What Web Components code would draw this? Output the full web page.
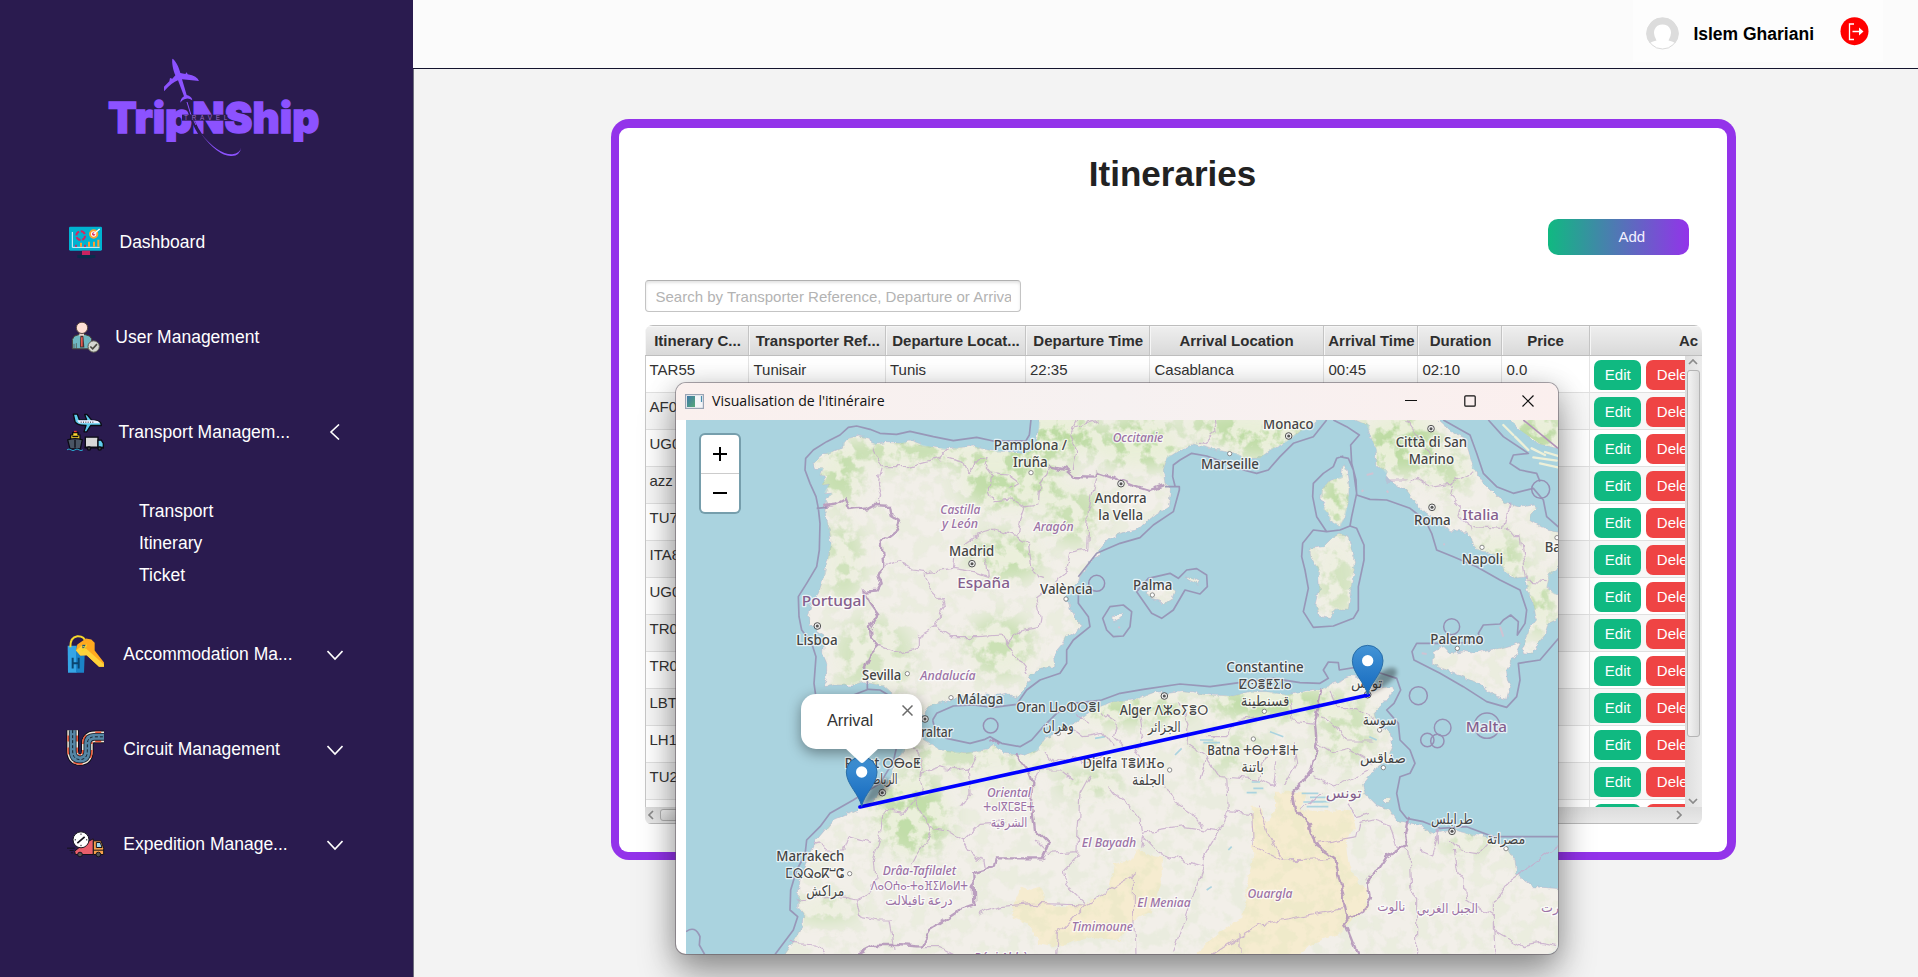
<!DOCTYPE html>
<html lang="en">
<head>
<meta charset="utf-8">
<title>TripNShip - Itineraries</title>
<style>
html,body{margin:0;height:100%;overflow:hidden}
body{font-family:"Liberation Sans",Arial,sans-serif;background:#f3f3f3}
</style>
</head>
<body>
<trip-app></trip-app>
<script>
function define(name, html, setup) {
  const t = document.createElement('template');
  t.innerHTML = html;
  customElements.define(name, class extends HTMLElement {
    connectedCallback() {
      if (this.shadowRoot) return;
      const root = this.attachShadow({mode: 'open'});
      root.appendChild(t.content.cloneNode(true));
      if (setup) setup.call(this, root);
    }
  });
}

/* ---------- brand logo ---------- */
define('brand-logo', `
<style>:host{display:block;height:194.5px;padding:40px 0 0 90px;box-sizing:border-box}svg{display:block;overflow:visible}</style>
<svg width="250" height="130" viewBox="0 0 750 390">
  <text x="54" y="280" textLength="634" lengthAdjust="spacingAndGlyphs" font-family="Inter,sans-serif" font-weight="900" font-size="126" fill="#8c52ff" stroke="#8c52ff" stroke-width="4">TripNShip</text>
  <path d="M290 186Q302 240 335 290" fill="none" stroke="#2a1b4f" stroke-width="10"/>
  <path d="M291 186Q300 225 318 255" fill="none" stroke="#8c52ff" stroke-width="3"/>
  <rect x="276" y="224" width="136" height="18" fill="#2a1b4f"/>
  <text x="282" y="240" font-size="19" textLength="130" font-family="Liberation Sans,sans-serif" fill="#9c6bc0">TRAVEL</text>
  <path d="M332 280Q385 345 427 343Q450 340 454 322Q449 350 422 348Q382 347 332 280Z" fill="#8c52ff"/>
  <path d="M247 56C255 59 266 78 271 99L286 102L290 97L293 103Q322 108 327 123L276 118L290 165C300 168 306 172 307 181Q297 174 289 176Q277 177 271 188Q271 176 282 169L264 121Q246 127 222 154V140L238 124L240 114L247 116L256 106C249 89 245 68 247 56Z" fill="#8c52ff"/>
</svg>`);

/* ---------- navigation ---------- */
const ICONS = {
  dashboard: ['51 40 111 111', `
   <rect x="57" y="48" width="99" height="72" rx="4" fill="#00b3d1"/><path d="M96 120h24v14H96z" fill="#c92360"/><path d="M82 133h54v8q-27 3-54 0z" fill="#0a2b4a"/>
   <path d="M67 64v46h82" stroke="#e8f4f8" stroke-width="3" fill="none"/>
   <circle cx="92" cy="75" r="13" fill="none" stroke="#d6275f" stroke-width="6" stroke-dasharray="15 5"/>
   <circle cx="131" cy="70" r="11" fill="#fff" stroke="#ff9f30" stroke-width="6"/><circle cx="131" cy="70" r="5" fill="#d6275f"/><path d="M131 70l18-15" stroke="#fff" stroke-width="4"/>
   <path d="M93 96v12M117 93v15M132 93v15M145 87v21" stroke="#ff9f30" stroke-width="6"/><path d="M78 102v7M105 102v7" stroke="#d6275f" stroke-width="5"/>`],
  user: ['51 325.5 111 111', `
   <path d="M67 415V387l6-10 14-5h18l14 5 6 8v30z" fill="#6fb9c3" stroke="#4b4238" stroke-width="3"/>
   <path d="M88 368h14v8l-6 8-8-8z" fill="#e5d6cf"/><path d="M91 376h9l3 35h-13z" fill="#4a3030"/><path d="M93 380h5v28h-5z" fill="#e4574d"/>
   <circle cx="96" cy="352" r="17" fill="#ffe0d6" stroke="#5a4740" stroke-width="3"/><path d="M79 398v16M72 400v14" stroke="#4b4238" stroke-width="2"/>
   <circle cx="131" cy="408" r="17" fill="#d5d8d0" stroke="#5a5a50" stroke-width="3"/><path d="M121 408l7 7 13-14" fill="none" stroke="#4a4a40" stroke-width="5"/>`],
  transport: ['51 610.5 111 111', `
   <g stroke="#0b0b14" stroke-width="4" stroke-linejoin="round"><path d="M70 611h12l6 17h22l-6-16h7l14 17q30 0 29 16H122l-12 19h-8l6-19Q80 645 75 633z" fill="#5fcdee"/><path d="M82 629h50q15 2 18 9H90q-6-2-8-9z" fill="#eef" stroke="none"/><path d="M92 635h42" stroke="#222" stroke-width="3" stroke-dasharray="3 4"/>
   <path d="M62 690v-17h6v-7h16v7h6v17z" fill="#ffd92e"/><path d="M53 688q23-7 44 0l-6 27H60z" fill="#4a5564"/><path d="M75 688v24M67 678h18" /><path d="M72 663h8" stroke="#e33"/></g>
   <path d="M51 718q6-5 12 0t12 0 12 0 12 0" fill="none" stroke="#2ba6cd" stroke-width="3"/>
   <g stroke="#0b0b14" stroke-width="4"><path d="M106 680h38v31h-38z" fill="#d8d8d8"/><path d="M144 689h10l6 10v13h-16z" fill="#5fcdee"/><path d="M104 711h58" stroke-width="5"/><circle cx="117" cy="714" r="5" fill="#444"/><circle cx="149" cy="714" r="5" fill="#444"/></g>`],
  key: ['51 46.5 111 111', `
   <path d="M53 76h27v81H54z" fill="#35a5e5"/><path d="M78 76h27l-3 81H78z" fill="#1b83c8"/>
   <path d="M61 80Q60 50 82 47Q104 46 107 66" fill="none" stroke="#f6d72c" stroke-width="6"/>
   <path d="M68 112v32M86 112v32M68 128h18" stroke="#0a4570" stroke-width="6"/>
   <path d="M78 90L82 72 108 54 124 57 134 67V90L162 126V139H147L110 104 91 105z" fill="#ffa91f"/><path d="M78 90L97 74l65 58v7H147L110 104 91 105z" fill="#ffd23a"/><rect x="97" y="73" width="11" height="10" fill="#14537e"/><path d="M98 77h6v3h-6z" fill="#ffd23a"/><path d="M95 92q10-5 14-20" stroke="#f6d72c" stroke-width="4" fill="none"/>`],
  circuit: ['51 331.5 111 111', `
   <g fill="none"><path d="M68 329v62q0 26 22 26t22-26V371q0-22 22-22h28" stroke="#10101a" stroke-width="38"/><path d="M68 329v62q0 26 22 26t22-26V371q0-22 22-22h28" stroke="#f3eadc" stroke-width="32"/><path d="M68 329v62q0 26 22 26t22-26V371q0-22 22-22h28" stroke="#f15a3a" stroke-width="32" stroke-dasharray="18 18" stroke-dashoffset="20"/><path d="M68 329v62q0 26 22 26t22-26V371q0-22 22-22h28" stroke="#1b2430" stroke-width="23"/><path d="M68 329v62q0 26 22 26t22-26V371q0-22 22-22h28" stroke="#5687a6" stroke-width="18"/><path d="M68 329v62q0 26 22 26t22-26V371q0-22 22-22h28" stroke="#15202c" stroke-width="3" stroke-dasharray="9 6"/></g>`],
  truck: ['51 616.5 111 111', `
   <g stroke="#15131c" stroke-width="3" stroke-linejoin="round"><path d="M74 692q16-12 22-20l34-17v47H76z" fill="#e95e6b"/><path d="M130 661h23l8 22v19h-31z" fill="#f7a04b"/><path d="M139 666h12l5 15h-17z" fill="#9fd8ee"/><path d="M131 689h30" /><circle cx="90" cy="702" r="7" fill="#555"/><circle cx="145" cy="702" r="7" fill="#555"/><circle cx="93" cy="658" r="24" fill="#fff"/><path d="M82 668l22-19" stroke-width="5"/><path d="M93 639v4M93 673v4M74 658h4M108 658h4" stroke-width="3"/><path d="M51 683h23M59 690h12M63 697h6" /></g>`]
};
define('nav-item', `
<style>
:host{display:flex;align-items:center;height:95px;color:#fff;font-size:17.5px;box-sizing:border-box;padding-left:67px}
svg{display:block;flex:none}.i{width:37px;height:37px;overflow:visible}
.t{flex:none;white-space:nowrap;width:205px}
.c{width:16px;height:16px;fill:none;stroke:#fff;stroke-width:1.6}
</style><svg class="i"></svg><span class="t"><slot></slot></span>`, function (root) {
  const [vb, art] = ICONS[this.getAttribute('icon')];
  const s = root.querySelector('.i'); s.setAttribute('viewBox', vb); s.innerHTML = art;
  const t = root.querySelector('.t');
  t.style.marginLeft = this.getAttribute('gap') + 'px';
  t.style.width = (223.2 - this.getAttribute('gap')) + 'px';
  const c = this.getAttribute('chevron');
  if (c) t.insertAdjacentHTML('afterend', `<svg class="c" viewBox="0 0 16 16"><path d="${c === 'left' ? 'M12 .5L4 8l8 7.5' : 'M.5 4l7.5 8 7.5-8'}"/></svg>`);
});
define('nav-sub', `
<style>:host{display:block;height:32px;line-height:32px;padding-left:139px;color:#fff;font-size:17.5px}</style><slot></slot>`);
define('side-bar', `
<style>
:host{display:block;width:413px;height:977px;background:#2a1b4f;box-sizing:border-box;flex:none}
.sub{padding:15.5px 0 16px}
</style>
<brand-logo></brand-logo>
<nav-item icon="dashboard" gap="15.5">Dashboard</nav-item>
<nav-item icon="user" gap="11.3">User Management</nav-item>
<nav-item icon="transport" gap="14.5" chevron="left">Transport Managem...</nav-item>
<div class="sub"><nav-sub>Transport</nav-sub><nav-sub>Itinerary</nav-sub><nav-sub>Ticket</nav-sub></div>
<nav-item icon="key" gap="19.3" chevron="down">Accommodation Ma...</nav-item>
<nav-item icon="circuit" gap="19.3" chevron="down">Circuit Management</nav-item>
<nav-item icon="truck" gap="19.3" chevron="down">Expedition Manage...</nav-item>`);

/* ---------- top bar ---------- */
define('top-bar', `
<style>
:host{display:flex;justify-content:flex-end;height:69px;background:#fbfbfb;border-bottom:1px solid #14142e;box-sizing:border-box;padding-right:35px}
.box{display:flex;width:250px;height:62px;background:#fdfdfd;box-sizing:border-box;padding:17px 0 0 13px}
svg{flex:none}
.n{font-weight:bold;font-size:17.5px;line-height:20px;margin:6.5px 0 0 14.4px;width:121px;white-space:nowrap;color:#000}
.o{margin:0 0 0 25.600px}
</style>
<div class="box">
<svg width="33" height="33" viewBox="0 0 33 33"><circle cx="16.5" cy="16.5" r="15.5" fill="#fff" stroke="#dadada"/><path d="M16.5.5a16 16 0 0 1 13 25.500Q26 24 22.500 23.500 28 14 21.500 8.800 16.500 6 11.500 8.800 5 14 10.500 23.500 7 24 3.500 26A16 16 0 0 1 16.500.5Z" fill="#dcdcdc"/></svg>
<span class="n">Islem Ghariani</span>
<svg class="o" width="29" height="29" viewBox="0 0 29 29"><circle cx="14.500" cy="14.200" r="14" fill="#f00"/><path d="M14 7H9.500v15.500H14M12.500 14.500h9" fill="none" stroke="#fff" stroke-width="1.300"/><path d="M19 10.500l4.500 4-4.500 4z" fill="#fff"/></svg>
</div>`);

/* ---------- table ---------- */
define('row-button', `
<style>:host{display:block;box-sizing:border-box;height:30px;line-height:30px;border-radius:7px;color:#fff;font-size:15px;padding-left:10.500px;flex:none;white-space:nowrap}</style><slot></slot>`);
define('itinerary-table', `
<style>
:host{display:grid;grid-template:31px 451px 17px/1fr;width:1056.500px;border-radius:8px 8px 6px 6px;overflow:hidden;box-sizing:border-box;color:#333;font-size:15px}
.r,.h{display:grid;grid-template-columns:104px 136.500px 140px 124.500px 174px 94px 84px 88px 1fr}
.h{background:linear-gradient(#efefef,#d9d9d9);border-top:1px solid #bdbdbd;border-bottom:1px solid #bebebe;box-sizing:border-box;font-weight:bold;text-align:center;line-height:29px;color:#2e2e2e}
.h span{border-right:1px solid #c4c4c4;box-shadow:inset 1px 1px #f6f6f6;white-space:nowrap;overflow:hidden;padding-left:2px}
.h span:nth-child(5),.h span:nth-child(8){padding-left:0}
.h span:last-child{text-align:left;padding-left:89px;border-right:0}
.m{display:grid;grid-template-columns:1fr 16.500px;min-height:0}
.b{overflow:hidden;border-left:1px solid #c8c8c8;min-width:0}
.b .r{width:1055px;margin-left:-1px}
.r{height:37px;border-bottom:1px solid #e0e0e0;box-sizing:border-box;background:#fff}
.r:nth-child(even){background:#f7f7f7}
.r>*{border-right:1px solid #e4e4e4;padding:5px 0 0 4.500px;line-height:17px;min-width:0}
.r>div{display:flex;gap:5.500px;padding:4px 0 0 4.300px}
.e{background:#10b981;width:46.500px}.d{background:#ef4444;width:60px}
.v{background:linear-gradient(90deg,#dedede,#ececec)}
svg{display:block;flex:none;fill:none;stroke:#8a8a8a;stroke-width:1.700}
.v{display:flex;flex-direction:column;align-items:center;padding-top:3px;box-sizing:border-box}
.v i{flex:none;width:11px;height:365px;border:1px solid #b4b4b4;border-radius:3px;background:linear-gradient(90deg,#f3f3f3,#dcdcdc);margin:5px 0 61px}
.f{background:linear-gradient(#dcdcdc,#e9e9e9);display:flex;align-items:center;padding:0 18px 0 1px;border-bottom:1px solid #bbb;box-sizing:border-box}
.f i{flex:1;margin:0 14px 0 4px;height:10px;border:1px solid #b0b0b0;border-radius:3px;background:linear-gradient(#f3f3f3,#dedede);max-width:760px}
.f svg:last-child{margin-left:auto}
</style>
<div class="h"><span>Itinerary C...</span><span>Transporter Ref...</span><span>Departure Locat...</span><span>Departure Time</span><span>Arrival Location</span><span>Arrival Time</span><span>Duration</span><span>Price</span><span>Ac</span></div>
<div class="m"><div class="b"></div><div class="v"><svg width="10" height="6"><path d="M1 5l4-4 4 4"/></svg><i></i><svg width="10" height="6"><path d="M1 1l4 4 4-4"/></svg></div></div>
<div class="f"><svg width="10" height="10"><path d="M7 1L3 5l4 4"/></svg><i></i><svg width="10" height="10"><path d="M3 1l4 4-4 4"/></svg></div>`, function (root) {
  const rows = [['TAR55', 'Tunisair', 'Tunis', '22:35', 'Casablanca', '00:45', '02:10', '0.0'],
    ['AF0'], ['UG0'], ['azz'], ['TU7'], ['ITA8'], ['UG0'], ['TR0'], ['TR0'], ['LBT'], ['LH1'], ['TU2'], ['']];
  root.querySelector('.b').innerHTML = rows.map((r, n) => {
    let s = '';
    for (let i = 0; i < 8; i++) s += `<span>${r[i] || ''}</span>`;
    return `<div class="r">${s}<div><row-button class="e">${n < 12 ? 'Edit' : ''}</row-button><row-button class="d">${n < 12 ? 'Dele' : ''}</row-button></div></div>`;
  }).join('');
});

/* ---------- card ---------- */
define('itinerary-card', `
<style>
:host{display:block;box-sizing:border-box;width:1125px;height:741px;margin:50px 0 0 197.500px;padding:8.500px;background:#9333ea;border-radius:18px}
.in{background:#fff;border-radius:9px;height:724px;box-sizing:border-box;padding:23px 26px 0;display:flex;flex-direction:column;align-items:flex-start}
h1{margin:0;align-self:stretch;text-align:center;font-size:35px;line-height:46px;color:#222;padding-right:1px}
.add{align-self:flex-end;margin:22px 12.500px 0 0;width:140.500px;height:36.500px;line-height:36.500px;border-radius:10px;background:linear-gradient(90deg,#10b981,#9333ea);color:#f3f0ff;font-size:15px;text-align:center;box-sizing:border-box;padding-left:27px}
.s{margin:25px 0 13px;width:375.500px;height:32px;border:1px solid #bcbcbc;border-color:#b0b0b0 #c4c4c4 #c4c4c4;border-radius:4px;box-sizing:border-box;box-shadow:inset 0 2px 3px #e4e4e4;padding:0 8.500px 0 9.500px;font-size:15px;line-height:31px;color:#b3b3b3}
.s div{overflow:hidden;white-space:nowrap}
</style>
<div class="in"><h1>Itineraries</h1><div class="add">Add</div><div class="s"><div>Search by Transporter Reference, Departure or Arriva</div></div><itinerary-table></itinerary-table></div>`);

/* ---------- map ---------- */
const LAND = [
 // Iberia, France and Italy
 'M1198 130L1196 180 1186 238 1150 252 1110 246 1060 243 1030 238 1000 228 970 232 925 237 880 232 850 226 815 212 780 220 740 218 710 222 690 216 685 205 655 198 630 205 610 218 608 235 585 243 560 248 540 265 522 280 527 295 548 296 540 315 562 318 545 345 568 342 552 368 576 366 560 390 553 405 556 430 560 460 570 490 573 520 565 560 555 600 545 640 535 670 515 700 505 740 508 765 538 768 530 785 552 800 550 820 548 850 560 880 560 925 548 950 580 945 640 945 672 935 700 942 730 948 760 975 772 1000 800 1035 850 1035 868 1010 900 1000 935 985 1000 975 1080 975 1100 970 1130 985 1150 960 1170 930 1165 925 1200 895 1245 890 1240 860 1265 830 1280 800 1330 768 1300 740 1285 700 1275 680 1310 640 1340 590 1360 560 1382 555 1375 540 1400 510 1440 490 1490 480 1545 435 1585 410 1590 375 1592 350 1575 340 1570 300 1580 265 1620 240 1660 222 1690 230 1725 240 1780 248 1810 265 1860 265 1890 240 1940 215 1980 185 2020 165 2050 130H2115L2150 152 2180 165 2195 205 2210 240 2210 285 2230 300 2250 325 2270 352 2295 355 2320 390 2360 430 2400 450 2430 485 2480 485 2495 510 2510 540 2540 545 2580 560 2590 600 2625 625 2660 620 2662 660 2680 700 2690 750 2670 775 2660 800 2648 830 2655 852 2680 852 2690 825 2715 795 2725 760 2780 735V690L2720 655 2730 615 2780 570V490L2720 480 2670 450 2675 430 2690 415 2680 405 2640 412 2600 400 2560 370 2530 340 2500 290 2485 240 2475 205 2430 180 2375 130Z',
 'M2595 130L2640 180 2700 222 2790 245V130Z',
 'M2113 285L2121 310 2127 350 2125 400 2115 440 2100 470 2070 450 2065 430 2050 418 2058 395 2043 385 2045 360 2065 335 2105 320 2108 290Z',
 'M2100 490L2125 500 2135 540 2147 575 2138 620 2130 680 2125 720 2085 720 2070 745 2040 740 2028 705 2038 660 2035 600 2012 560 2010 535 2050 530 2080 500Z',
 'M1515 672L1545 655 1590 640 1607 665 1597 690 1575 705 1560 690 1532 685Z','M1635 625L1655 622 1680 635 1675 643Z','M1415 748L1430 732 1450 727 1442 745 1422 754Z',
 'M2380 845L2400 832 2430 848 2470 843 2500 850 2540 840 2580 835 2642 818 2620 865 2600 900 2602 930 2610 945 2600 988 2560 975 2520 945 2470 920 2420 900 2380 885Z',
 // North Africa
 'M420 1770L455 1720 490 1660 492 1630 475 1610 475 1570 480 1530 500 1470 525 1415 580 1350 650 1320 700 1290 740 1245 770 1180 790 1135 800 1105 840 1100 870 1120 900 1140 975 1148 1040 1140 1060 1125 1090 1150 1150 1157 1190 1140 1215 1105 1250 1090 1290 1070 1340 1035 1380 1010 1420 995 1480 990 1540 968 1580 970 1630 965 1710 975 1780 978 1830 965 1880 965 1940 975 2000 965 2040 960 2080 940 2130 920 2180 925 2210 955 2255 950 2260 965 2230 1000 2205 1025 2210 1060 2250 1085 2260 1130 2245 1170 2200 1200 2170 1235 2175 1270 2210 1305 2250 1320 2270 1350 2340 1370 2380 1390 2440 1380 2480 1390 2540 1400 2600 1430 2625 1470 2630 1510 2680 1550 2790 1558V1780H420Z','M2228 1290L2240 1280 2252 1285 2250 1300 2232 1300Z'
].join('');
const DESERT = 'M1835 1310L1860 1310 1880 1362 1905 1320V1265H2000L1980 1320 2080 1325 2135 1320 2150 1370 2120 1410 2125 1460 2140 1520 2185 1560 2180 1620 2140 1645 2100 1690 2020 1720 1960 1760H1665L1720 1700 1810 1640 1825 1520 1840 1460ZM1425 1485L1480 1470 1490 1440 1565 1460V1550L1530 1630 1480 1650 1440 1712 1360 1700 1250 1730 1200 1720 1160 1660 1120 1640V1605L1145 1550 1170 1560 1200 1550 1215 1590 1240 1610 1330 1605 1400 1570Z';
const SEA_LINES = 'M1175 130L1168 195 1158 212 1060 213 1010 202 940 212 880 200 810 184 770 193 720 190 690 178 650 168 625 172 600 195 560 215 520 240 497 265 495 300 510 340 528 380 535 415 540 460 538 540 530 590 500 640 475 680 477 740 485 780 515 820 528 860 522 940 527 975M640 975L685 958 720 960 745 975M530 415L560 412M682 932V958M878 1050L890 1030 940 1008 1000 1005 1060 1012 1130 1003 1160 960 1200 930 1260 910 1280 880 1280 840 1300 810 1350 770 1345 740 1315 700 1315 660M1315 620L1370 550 1440 520 1500 503 1540 465 1600 425 1618 360 1618 350H1575M1605 348L1598 320 1600 285 1620 270 1655 250 1700 258 1760 280 1810 300 1850 310 1885 300 1920 260 1960 220 2020 200 2060 150M878 1050L885 1080 920 1105 990 1120 1035 1108 1050 1100 1085 1120 1140 1130 1175 1110 1210 1070 1250 1030 1300 1000 1385 990 1440 970 1510 958 1620 942 1710 950 1820 935 1900 925 1980 938 2040 940 2065 925 2050 900 2065 876 2095 878 2098 900 2160 890 2230 912 2270 925 2282 960 2262 1000 2240 1020 2275 1060 2280 1110 2310 1140 2325 1180 2310 1210 2280 1220 2270 1270 2280 1320 2300 1345 2350 1355 2400 1375 2480 1370 2560 1400H2754M770 1130L760 1175 720 1240 640 1290 570 1330 540 1370 500 1410 495 1455 470 1500 452 1560 450 1620 473 1640 460 1680 400 1760M138 1685Q165 1665 180 1700L178 1725 195 1755M2080 150L2120 170 2158 195 2132 225 2135 280 2148 330 2150 375 2190 388 2240 390 2310 415 2355 450 2375 490 2390 540 2440 560 2510 590 2580 630 2640 660 2660 720 2655 760 2632 795 2635 755 2612 735 2590 750 2580 762 2530 765 2515 790 2525 815 2440 820 2330 820 2316 845 2322 870 2400 910 2470 950 2540 995 2600 1012 2630 980 2640 930 2635 880 2700 870 2760 800M2410 150L2490 195 2510 250 2530 310 2570 350 2620 370 2680 355 2710 390 2720 440 2760 475M2545 150L2590 200 2665 250 2620 255 2610 280 2640 300 2690 310 2700 335M2100 260L2125 265 2140 300 2150 370 2135 440 2130 468 2150 475 2172 525 2172 570 2155 650 2155 720 2140 745 2080 768 2020 772 1990 725 2005 655 1995 600 1985 560 1988 520 2020 480 2060 485 2100 480 2130 468M2060 485L2030 440 2018 380 2020 340 2050 310 2080 290 2090 265 2110 258M1490 665L1525 625 1590 610 1615 625 1640 600 1670 596 1700 615 1702 650 1680 672 1635 660 1600 720 1565 745 1535 730ZM1388 745L1410 710 1450 705 1475 725 1470 770 1450 798 1420 800 1400 780Z';
const CIRCLES = [[1370,640,24],[1052,1067,22],[2435,770,24],[2335,977,27],[2408,1073,25],[2702,358,27],[2541,1067,38],[2362,1110,20],[2392,1113,20]];
const BORDERS = 'M553 405L590 400 612 388 625 420 680 415 700 405 750 408 755 435 782 452 770 480 725 515 730 590 712 610 722 640 710 662 670 665 690 700 715 735 690 775 692 800 718 830 690 860 670 905M1230 290L1280 300 1300 318 1365 320 1370 305 1430 325 1480 345 1530 360 1570 345M1055 1110L1075 1125M1125 1150L1165 1200 1180 1240 1175 1300 1185 1380 1225 1420 1205 1465 1070 1465 1065 1490 1000 1510 1003 1605 960 1620 870 1680 840 1730 780 1725 700 1725 640 1755M2045 955L2035 1010 2025 1060 2030 1120 2015 1200 1985 1240 1955 1270 1965 1320 2010 1365 2025 1420 2085 1465 2110 1580 2125 1645 2115 1660 2155 1760M2305 1340L2295 1390 2300 1425 2240 1460 2215 1500 2180 1525 2190 1580 2170 1625 2125 1648';
const ADMIN = 'M705 225L700 245 725 290 800 290 855 275 900 265 925 240M725 290L712 340 722 375 715 405M925 262L970 275 985 305 1015 270 1045 260M1045 260L1035 290 1060 320 1050 330 1048 370 1060 395 1120 390 1155 410 1195 405M1060 310L1100 315 1135 340 1110 355M1230 290L1200 340 1195 400M1155 410L1145 440 1130 500 1165 520 1175 590 1190 620 1215 625M1370 325L1345 420 1340 540 1290 550 1280 600 1255 620 1230 650 1190 680 1200 740M1130 500L1060 480 1010 495 975 520M940 595L1000 605 1045 620 1040 580 1030 550M735 590L780 575 820 600 860 605 940 595 945 560M855 610L870 655 905 690 910 710 885 770 835 800 835 835 780 850 720 830M885 770L930 800 1010 800 1090 795 1100 820 1140 780 1195 770 1200 740M1100 820L1120 850 1150 890 1165 915M1310 150L1290 190 1310 240 1300 300M1720 150L1725 190 1680 228M1290 180L1340 160 1380 150M2315 340L2330 325 2370 350 2430 340 2500 305M2300 150L2340 210 2370 260M2440 345L2430 380 2460 410 2450 440 2490 470 2495 490M2500 470L2590 475 2610 400M2600 475L2620 500 2640 500 2660 630 2720 635M2240 330L2300 330M800 1110L850 1170 840 1210 900 1190 950 1200 1000 1190M840 1210L850 1260 820 1290 790 1330 730 1320 720 1400 700 1470 705 1530 690 1570 650 1590 600 1580 470 1590M525 1415L560 1440 610 1440 625 1400 690 1420M820 1290L860 1350 875 1390 830 1450 810 1490M960 1310L990 1270 985 1200 1010 1160M870 1370L920 1380 970 1410 1020 1360 1100 1355M970 1410L1000 1460 1035 1470 1040 1500M650 1590L660 1640 720 1650 750 1650 765 1740M455 1720L530 1725 550 1750M840 1730L900 1730 950 1755M1010 1635L1080 1610 1180 1600 1340 1605 1440 1540 1490 1510M1340 1605L1255 1690 1250 1755M1280 1550L1270 1500 1310 1460 1320 1270 1350 1215M1185 1410L1225 1450 1310 1445M1180 1240L1200 1200 1260 1200 1300 1230M1340 1605L1280 1550M1480 1510L1480 1600 1485 1755M1405 1250L1430 1280 1470 1310 1500 1350 1505 1390 1630 1370 1735 1385M1505 1430L1510 1400 1560 1450 1690 1490 1600 1750M1570 1240L1600 1290 1660 1330 1690 1370M1690 1490L1690 1460 1735 1385 1760 1325 1835 1330 1840 1430 1925 1470 2085 1465M1760 1220L1765 1325M1855 1310L1880 1380 1925 1470M1720 1755L1860 1665 2115 1615M1800 1755V1695M2035 1420L2150 1400 2160 1360 2200 1350 2250 1365 2270 1430 2310 1445 2315 1560 2330 1580V1755M2400 1380L2375 1455 2340 1440M2395 1380V1420M2440 1440L2450 1500 2475 1530 2480 1590 2560 1640 2565 1755M2610 1530L2560 1600 2560 1680 2650 1730 2700 1720 2754 1730M2610 1530L2754 1430M2430 1410L2460 1440 2520 1450 2545 1420M1390 1030L1430 1060 1420 1100 1450 1130M1500 1040L1510 1100 1490 1150 1530 1190M1620 1000L1650 1060 1640 1120 1700 1160 1680 1230M1700 1100L1760 1100 1790 1050 1850 1040M1700 1160L1740 1220 1850 1230 1880 1160M1950 990L1960 1050 2025 1060M1860 1230L1900 1250 1910 1180M1960 1120L1970 1180 1930 1250M2040 1040L2080 1060 2120 1110 2200 1110M2070 960L2090 1010 2150 1010 2210 1050M2020 1220L2080 1250 2130 1230 2190 1200M2030 1120L2080 1150 2130 1140 2200 1180M1980 1320L2050 1270M2120 1300L2150 1340 2190 1330M1210 1140L1240 1180 1300 1160 1330 1180 1400 1150M1290 1070L1330 1100 1390 1090 1420 1130M1310 1030L1350 1060';
const LAKES = 'M1680 1110H1720M1690 1118H1740M1985 1270H2035M2010 1282H2060M1990 1296H2050M2000 1310H2065M2020 1295H2070M1835 1236H1860M1840 1255H1870M1820 1268H1850M1605 1155L1625 1135M1890 1085L1930 1100M2188 1100L2210 1110M1700 1560L1715 1550M1765 1440L1775 1430M1365 1105L1395 1100';
const VEG = [[1110,330,150,90,.9],[820,245,240,40,.8],[600,320,70,80,.8],[1230,200,160,70,1],[1500,240,130,50,1],[1860,200,130,60,.9],[2280,220,120,90,1],[1100,560,110,70,.8],[1300,430,90,90,.7],[610,570,60,120,.6],[700,860,120,120,.5],[1080,830,100,90,.7],[2090,390,45,90,1],[2580,560,80,70,.7],[2700,700,40,90,.9],[1000,1150,250,60,.5],[1480,1020,180,35,1],[1900,1000,200,45,1],[2120,1080,80,110,.6],[820,1340,110,120,.9],[560,1620,90,30,.7],[1350,1240,100,30,.8],[2480,1420,70,25,.7],[2090,620,60,120,.5],[1500,180,100,40,.9],[1780,170,160,40,.9],[2420,300,80,60,.7],[2690,190,90,60,1],[1780,1150,120,60,.5]];
// [text, centre x, baseline, width, kind]
const LABELS = [
 ['Pamplona /',1171,241,220],['Iruña',1171,290,104],['Castilla',961,431,120,'i'],['y León',960,475,108,'i'],['Aragón',1241,484,120,'i'],['Madrid',995,558,136],['España',1031,655,158,'c'],['Portugal',581,708,192,'c'],['València',1279,672,158],['Lisboa',531,825,124],['Sevilla',725,930,118],['Andalucía',924,930,166,'i'],['Málaga',1020,1001,140],['Oran ⵡⴰⵀⵔⴻⵏ',1255,1026,252],['وهران',1255,1082,94,'a'],['raltar',891,1101,95],['Rabat ⵔⴱⴰⵟ',728,1193,228],['الرباط',733,1243,80,'a'],['Marrakech',511,1473,204],['ⵎⵕⵕⴰⴽⵯⵛ',524,1524,176],['مراكش',556,1577,114,'a'],['Oriental',1107,1280,132,'i'],['ⵜⴰⵏⴳⵎⵓⴹⵜ',1107,1324,154,'r'],['الشرقية',1107,1371,110,'r'],['Drâa-Tafilalet',838,1516,220,'i'],['ⴷⴰⵔⵄⴰ-ⵜⴰⴼⵉⵍⴰⵍⵜ',838,1561,292,'r'],['درعة تافيلالت',837,1605,202,'r'],['El Bayadh',1407,1430,163,'i'],['Timimoune',1387,1683,184,'i'],['El Meniaa',1572,1611,160,'i'],['Ouargla',1890,1584,135,'i'],['Djelfa ⴶⴻⵍⴼⴰ',1451,1195,245],['الجلفة',1525,1245,98,'a'],['Alger ⴷⵣⴰⵢⴻⵔ',1572,1035,265],['الجزائر',1573,1085,98,'a'],['Constantine',1875,905,232],['ⵇⵙⴻⵟⵉⵏⴰ',1876,957,158],['قسنطينة',1875,1007,146,'a'],['Batna ⵜⴱⴰⵜⴻⵏⵜ',1839,1156,274],['باتنة',1838,1205,68,'a'],['تونس',2180,955,94,'a'],['سوسة',2219,1065,102,'a'],['صفاقس',2229,1180,138,'a'],['تونس',2111,1285,108,'c'],['طرابلس',2436,1363,126,'a'],['مصراتة',2598,1421,116,'a'],['Malta',2539,1085,124,'c'],['نالوت',2254,1622,84,'r'],['الجبل الغربي',2422,1630,184,'r'],['رت',2730,1625,54,'r'],['Occitanie',1494,217,152,'i'],['Monaco',1945,178,152],['Marseille',1770,296,174],['Andorra',1442,398,155],['la Vella',1442,449,134],['Città di San',2374,231,214],['Marino',2374,282,136],['Roma',2377,466,110],['Italia',2522,451,110,'c'],['Napoli',2527,582,124],['Ba',2738,545,48],['Palma',1538,661,118],['Palermo',2451,821,160],['Béni Abbès',1090,1776,178,'i']];
const DOTS = [[1173,308],[1278,687],[802,911],[933,983],[1255,1090],[629,1511],[1769,251],[1537,675],[2452,835],[2526,532],[2751,503],[1873,1024],[1840,1107],[1589,1200],[2219,1080],[2230,1193],[2598,1436]];
const CAPS = [[996,581],[532,768],[855,1047],[727,1268],[1443,341],[1946,198],[2373,176],[2376,412],[1573,978],[2436,1384],[2183,974]];
const marker = (x, y) => `<g transform="translate(${x} ${y})"><path d="M0-2L30-62Q62-88 82-80 98-68 74-46 40-14 0-2Z" fill="#000" opacity=".34" filter="url(#soft)"/><path d="M0 0C-7-36-46-66-46-103A46 46 0 0 1 46-103C46-66 7-36 0 0Z" fill="url(#pin)" stroke="#2a6ea8" stroke-width="3"/><circle cy="-103" r="17" fill="#fff"/></g>`;

define('route-map', `
<style>
:host{display:block;position:relative;width:872px;height:534px;overflow:hidden;background:#aad3df}
svg{display:block}
text{font-family:"Noto Sans","DejaVu Sans",sans-serif;text-anchor:middle;paint-order:stroke;stroke:#fff;stroke-opacity:.7;stroke-width:8px;stroke-linejoin:round}
.zoom{position:absolute;left:13px;top:12.500px;width:38px;border:2px solid rgba(40,80,95,.4);border-radius:6px;background:#fff;background-clip:padding-box}
.zoom div{height:38px;display:grid;place-items:center}.zoom div+div{border-top:1px solid #ccc}
.pop{position:absolute;left:115px;top:274px;width:121px;height:55px;border-radius:15px;background:#fff;box-shadow:0 4px 14px rgba(0,0,0,.4);color:#333;font-size:16.300px;line-height:53px;box-sizing:border-box;padding-left:26px}
.tip{position:absolute;left:44px;top:54px}
.x{position:absolute;left:101px;top:10.500px}
</style>
<svg width="872" height="534" viewBox="138 150 2616 1602">
 <defs>
  <filter id="rough" x="138" y="100" width="2650" height="1700" filterUnits="userSpaceOnUse"><feTurbulence type="fractalNoise" baseFrequency=".045" numOctaves="3" seed="4"/><feDisplacementMap in="SourceGraphic" scale="18" xChannelSelector="R" yChannelSelector="G"/></filter>
  <filter id="wobble" x="138" y="100" width="2650" height="1700" filterUnits="userSpaceOnUse"><feTurbulence type="fractalNoise" baseFrequency=".03" numOctaves="2" seed="9"/><feDisplacementMap in="SourceGraphic" scale="26" xChannelSelector="R" yChannelSelector="G"/></filter>
  <filter id="soft" x="-50%" y="-50%" width="200%" height="200%"><feGaussianBlur stdDeviation="7"/></filter>
  <filter id="fade" x="-60%" y="-60%" width="220%" height="220%" color-interpolation-filters="sRGB"><feGaussianBlur stdDeviation="26"/></filter>
  <filter id="grain" x="138" y="100" width="2650" height="1700" filterUnits="userSpaceOnUse" color-interpolation-filters="sRGB"><feTurbulence type="fractalNoise" baseFrequency=".022" numOctaves="4" seed="12"/><feColorMatrix values="0 0 0 0 .74  0 0 0 0 .86  0 0 0 0 .64  6 0 0 0 -2.700"/></filter>
  <mask id="veg" maskUnits="userSpaceOnUse" x="138" y="100" width="2650" height="1700"><g id="blobs" fill="#fff" filter="url(#fade)"></g></mask>
  <clipPath id="coast"><path d="${LAND}"/></clipPath>
  <linearGradient id="pin" x2="0" y2="1"><stop stop-color="#4394d6"/><stop offset="1" stop-color="#1468bd"/></linearGradient>
 </defs>
 <g filter="url(#rough)"><path d="${LAND}" fill="#f2efe9" stroke="#b9b3c9" stroke-width="1.500"/><path d="${DESERT}" fill="#f6ecd0"/></g>
 <g clip-path="url(#coast)"><rect x="138" y="100" width="2650" height="1180" filter="url(#grain)" opacity=".13"/><g mask="url(#veg)"><rect x="138" y="150" width="2616" height="1602" fill="#e6efd2" opacity=".75"/><rect x="138" y="100" width="2650" height="1700" filter="url(#grain)"/></g></g>
 <path d="${LAKES}" stroke="#aad3df" stroke-width="5" fill="none"/>
 <path d="M2590 165L2620 195M2625 200L2665 240M2675 235L2715 255M2680 262L2750 272M2700 280L2754 292M2715 246L2754 258" stroke="#eef0d8" stroke-width="7" stroke-linecap="round"/>
 <path d="M2180 315L2200 310M2165 365L2170 360M2240 362L2245 368M2410 522L2415 524M1435 770L1440 774M2580 770L2590 800M2345 850L2360 852" stroke="#cfc3d3" stroke-width="6"/>
 <g fill="none" stroke-linejoin="round"><path d="${ADMIN}" stroke="#c6a9cb" stroke-opacity=".8" stroke-width="3.500" filter="url(#wobble)"/><path d="${BORDERS}" stroke="#b292b8" stroke-opacity=".85" stroke-width="7" filter="url(#wobble)"/><path d="${SEA_LINES}" stroke="#9690b4" stroke-opacity=".9" stroke-width="5"/><g id="rings" stroke="#9690b4" stroke-width="4.500"></g></g>
 <path d="M2650 150L2754 235" stroke="#b292b8" stroke-width="5"/>
 <g id="dots"></g><g id="labels"></g>
 <path d="M660 1311L2185 975" stroke="#00f" stroke-width="11" stroke-linecap="round"/>
 ${marker(665, 1309)}${marker(2183, 975)}
</svg>
<div class="zoom"><div><svg width="14" height="14" stroke="#000" stroke-width="2"><path d="M7 0v14M0 7h14"/></svg></div><div><svg width="14" height="14" stroke="#000" stroke-width="2"><path d="M0 7h14"/></svg></div></div>
<div class="pop">Arrival<svg class="tip" width="34" height="15"><path d="M0 0H34L19 14Q17 16 15 14Z" fill="#fff"/></svg><svg class="x" width="11" height="11" stroke="#6b6b6b" stroke-width="1.500"><path d="M.5.5l10 10M10.500.5l-10 10"/></svg></div>`, function (root) {
  const put = (id, html) => { root.getElementById(id).innerHTML = html; };
  put('blobs', VEG.map(v => `<ellipse cx="${v[0]}" cy="${v[1]}" rx="${v[2]}" ry="${v[3]}" opacity="${v[4]}"/>`).join(''));
  put('rings', CIRCLES.map(c => `<circle cx="${c[0]}" cy="${c[1]}" r="${c[2]}"/>`).join(''));
  put('dots', DOTS.map(d => `<circle cx="${d[0]}" cy="${d[1]}" r="6.500" fill="#fff" stroke="#777" stroke-width="2.500"/>`).join('') +
    CAPS.map(d => `<circle cx="${d[0]}" cy="${d[1]}" r="10" fill="#eee" stroke="#555" stroke-width="3"/><circle cx="${d[0]}" cy="${d[1]}" r="4.500" fill="#555"/>`).join(''));
  const look = {
    i: 'fill="#9c72a6" font-style="italic" font-size="38" font-weight="500"',
    r: 'fill="#9c72a6" font-size="38"',
    a: 'fill="#444" font-size="44"',
    c: 'fill="#855f8e" font-size="44" font-weight="500"'
  };
  put('labels', LABELS.map(l => `<text x="${l[1]}" y="${l[2]}" textLength="${l[3]}" lengthAdjust="spacingAndGlyphs" ${look[l[4]] || 'fill="#444" font-size="42.500" font-weight="500"'}>${l[0]}</text>`).join(''));
});

define('map-window', `
<style>
:host{position:absolute;left:676px;top:383px;width:882px;height:571px;border-radius:10px;background:#fff;box-shadow:0 0 0 1px rgba(90,80,90,.5),0 22px 38px 0 rgba(0,0,0,.32),0 4px 28px rgba(0,0,0,.22)}
.w{border-radius:10px;overflow:hidden;height:571px}
.bar{height:37px;background:linear-gradient(90deg,#faf0ee,#f6f1f1 50%,#fbefee);display:flex;align-items:center;padding:0 24px 0 9px}
.t{font-family:"Open Sans","Noto Sans",sans-serif;font-size:14.100px;line-height:20px;color:#111;margin-left:8px;flex:1;white-space:nowrap;padding-bottom:1px}
.c{display:flex;gap:46.500px;padding-bottom:1px}
svg{display:block;fill:none;stroke:#111;stroke-width:1.200}
route-map{margin-left:10px}
</style>
<div class="w"><div class="bar">
<svg width="19" height="15" viewBox="0 0 19 15"><defs><linearGradient id="g" x2="1" y2="1"><stop stop-color="#3f78a8"/><stop offset="1" stop-color="#55a878"/></linearGradient></defs><rect x=".6" y=".6" width="17.800" height="13.800" fill="#f3f5f8" stroke="#9aa4b4"/><path d="M2 2h8v11H2z" fill="url(#g)" stroke="none"/><path d="M16.500 2v6" stroke="#4b8fb0"/></svg>
<span class="t">Visualisation de l'itinéraire</span>
<span class="c"><svg width="12" height="12"><path d="M0 5.500h12"/></svg><svg width="12" height="12"><rect x=".8" y=".8" width="10.400" height="10.400" rx="1"/></svg><svg width="12" height="12"><path d="M.5.5l11 11M11.500.5l-11 11"/></svg></span>
</div><route-map></route-map></div>`);

define('trip-app', `
<style>
:host{display:flex;width:1918px;height:977px;position:relative;overflow:hidden;background:#f3f3f3}
main{flex:1;min-width:0;display:flow-root}
.p{border-left:1px solid #6e6e7c;height:908px;display:flow-root;box-sizing:border-box}
itinerary-card{margin-left:196.500px}
</style>
<side-bar></side-bar><main><top-bar></top-bar><div class="p"><itinerary-card></itinerary-card></div></main><map-window></map-window>`);
</script>
</body>
</html>
